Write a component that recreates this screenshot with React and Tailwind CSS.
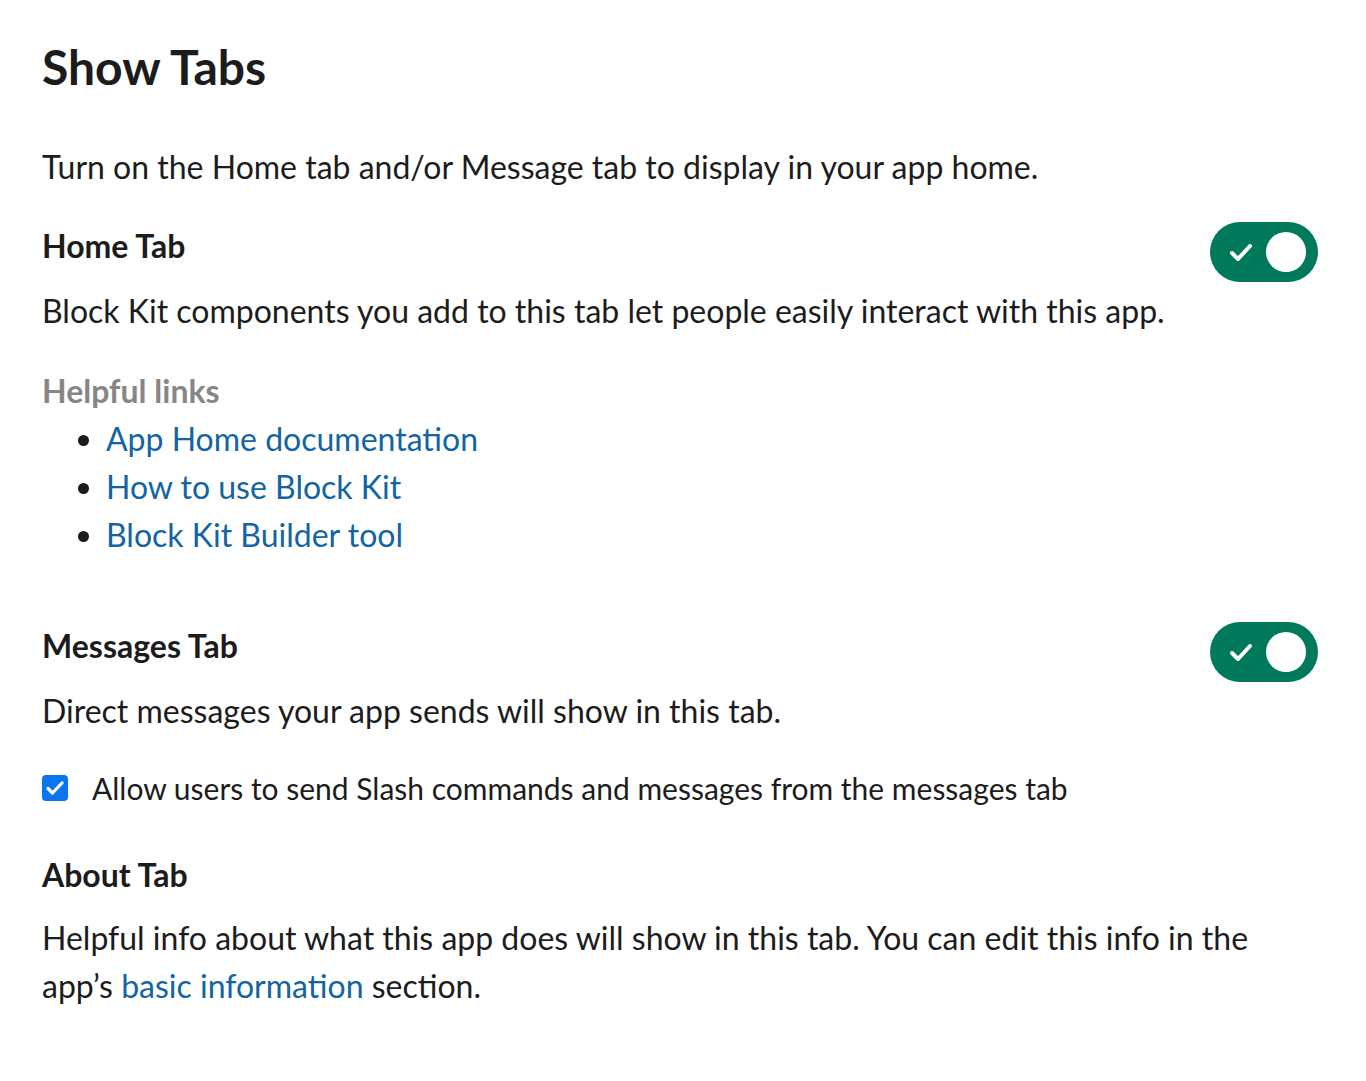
import { useState } from "react";

const Toggle = ({ on, onClick }) => (
  <button
    onClick={onClick}
    className={`w-[108px] h-[60px] rounded-full flex items-center justify-between pl-[19px] pr-[12px] shrink-0 ${
      on ? "bg-[#007a5a]" : "bg-[#868686]"
    }`}
  >
    <svg width="24" height="22" viewBox="0 0 24 22" fill="none">
      <path
        d="M3 12 L9 18 L21 5"
        stroke="white"
        strokeWidth="4"
        strokeLinecap="round"
        strokeLinejoin="round"
      />
    </svg>
    <span className="w-10 h-10 rounded-full bg-white" />
  </button>
);

const Link = ({ children }) => (
  <a href="#" className="text-[#1264a3] hover:underline">
    {children}
  </a>
);

export default function App() {
  const [home, setHome] = useState(true);
  const [messages, setMessages] = useState(true);
  const [allow, setAllow] = useState(true);

  return (
    <main
      className="min-h-screen bg-white text-[#1d1c1d] pl-[42px] pr-12 pt-[39px] pb-20 text-[32px] leading-[48px]"
      style={{ fontFamily: "Lato, 'Noto Sans', sans-serif" }}
    >
      <h1 className="text-[48px] leading-[56px] font-bold">Show Tabs</h1>

      <p className="mt-[48px]">
        Turn on the Home tab and/or Message tab to display in your app home.
      </p>

      {/* Home Tab */}
      <div className="mt-[31px] flex items-start justify-between">
        <h2 className="font-bold">Home Tab</h2>
        <Toggle on={home} onClick={() => setHome(!home)} />
      </div>
      <p className="mt-[5px]">
        Block Kit components you add to this tab let people easily interact with this app.
      </p>

      <div className="mt-8">
        <h3 className="font-bold text-[#868686]">Helpful links</h3>
        <ul className="list-disc pl-[64px] marker:text-[#1d1c1d]">
          <li>
            <Link>App Home documentation</Link>
          </li>
          <li>
            <Link>How to use Block Kit</Link>
          </li>
          <li>
            <Link>Block Kit Builder tool</Link>
          </li>
        </ul>
      </div>

      {/* Messages Tab */}
      <div className="mt-[63px] flex items-start justify-between">
        <h2 className="font-bold">Messages Tab</h2>
        <Toggle on={messages} onClick={() => setMessages(!messages)} />
      </div>
      <p className="mt-[5px]">Direct messages your app sends will show in this tab.</p>

      <label className="mt-[29px] flex items-center gap-[24px] cursor-pointer text-[30px]">
        <span
          onClick={() => setAllow(!allow)}
          className={`w-[26px] h-[26px] rounded-[4px] flex items-center justify-center shrink-0 ${
            allow ? "bg-[#0b75f0]" : "border-2 border-[#767676] bg-white"
          }`}
        >
          {allow && (
            <svg width="18" height="14" viewBox="0 0 18 14" fill="none">
              <path
                d="M2 7.5 L6.5 12 L16 2"
                stroke="white"
                strokeWidth="3.2"
                strokeLinecap="round"
                strokeLinejoin="round"
              />
            </svg>
          )}
        </span>
        <span>Allow users to send Slash commands and messages from the messages tab</span>
      </label>

      {/* About Tab */}
      <h2 className="mt-[39px] font-bold">About Tab</h2>
      <p className="mt-[15px]">
        Helpful info about what this app does will show in this tab. You can edit this info in the
        app’s <Link>basic information</Link> section.
      </p>
    </main>
  );
}
